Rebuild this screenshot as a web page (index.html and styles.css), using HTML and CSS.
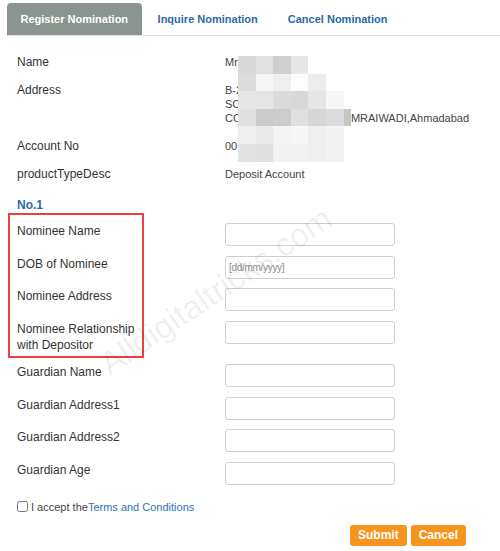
FILE: index.html
```html
<!DOCTYPE html>
<html lang="en">
<head>
    <meta charset="UTF-8">
    <meta name="viewport" content="width=device-width, initial-scale=1.0">
    <title>Nomination</title>
    <link rel="stylesheet" href="styles.css">
</head>
<body>
    <div class="page">
        <ul class="tabs">
            <li class="tab active">Register Nomination</li>
            <li class="tab">Inquire Nomination</li>
            <li class="tab">Cancel Nomination</li>
        </ul>

        <div class="content">
            <div class="info">
                <div class="info-row">
                    <div class="info-label">Name</div>
                    <div class="info-value">Mr<span class="masked" style="width:72px"></span></div>
                </div>
                <div class="info-row">
                    <div class="info-label">Address</div>
                    <div class="info-value">
                        B-2<br>
                        SC<br>
                        CC<span class="masked" style="width:110px"></span>MRAIWADI,Ahmadabad
                    </div>
                </div>
                <div class="info-row">
                    <div class="info-label">Account No</div>
                    <div class="info-value">00<span class="masked" style="width:100px"></span></div>
                </div>
                <div class="info-row">
                    <div class="info-label">productTypeDesc</div>
                    <div class="info-value">Deposit Account</div>
                </div>
            </div>

            <h4 class="section-title">No.1</h4>

            <form class="nomination-form">
                <div class="form-row">
                    <label>Nominee Name</label>
                    <input type="text" class="field">
                </div>
                <div class="form-row">
                    <label>DOB of Nominee</label>
                    <input type="text" class="field" placeholder="[dd/mm/yyyy]">
                </div>
                <div class="form-row">
                    <label>Nominee Address</label>
                    <input type="text" class="field">
                </div>
                <div class="form-row">
                    <label class="two-line">Nominee Relationship<br>with Depositor</label>
                    <input type="text" class="field">
                </div>
                <div class="form-row">
                    <label>Guardian Name</label>
                    <input type="text" class="field">
                </div>
                <div class="form-row">
                    <label>Guardian Address1</label>
                    <input type="text" class="field">
                </div>
                <div class="form-row">
                    <label>Guardian Address2</label>
                    <input type="text" class="field">
                </div>
                <div class="form-row">
                    <label>Guardian Age</label>
                    <input type="text" class="field">
                </div>

                <div class="accept">
                    <input type="checkbox" class="accept-box">
                    <span>I accept the</span><a href="#" class="terms">Terms and Conditions</a>
                </div>

                <div class="actions">
                    <button type="submit" class="btn">Submit</button>
                    <button type="button" class="btn">Cancel</button>
                </div>
            </form>
        </div>

        <!-- pixelated mask over personal data -->
        <div class="pixelate">
            <div class="px-row">
                <span style="background:#d9d9d9"></span><span style="background:#e2e2e2"></span><span style="background:#cfcfcf"></span><span style="background:#e6e6e6"></span>
            </div>
            <div class="px-row">
                <span style="background:#dcdcdc"></span><span style="background:#f6f6f6"></span><span style="background:#efefef"></span><span style="background:#fdfdfd"></span><span style="background:#ececec"></span>
            </div>
            <div class="px-row">
                <span style="background:#e6e6e6"></span><span style="background:#e5e5e5"></span><span style="background:#dadada"></span><span style="background:#d8d8d8"></span><span style="background:#e5e5e5"></span><span style="background:#f6f6f6"></span>
            </div>
            <div class="px-row">
                <span style="background:#e0e0e0"></span><span style="background:#cbcbcb"></span><span style="background:#cccccc"></span><span style="background:#dfdfdf"></span><span style="background:#d6d6d6"></span><span style="background:#dbdbdb"></span><span style="background:#c5c5c5;width:7px"></span>
            </div>
            <div class="px-row">
                <span style="background:#eeeeee"></span><span style="background:#e9e9e9"></span><span style="background:#f4f4f4"></span><span style="background:#f7f7f7"></span><span style="background:#efefef"></span><span style="background:#f3f3f3"></span>
            </div>
            <div class="px-row">
                <span style="background:#e2e2e2"></span><span style="background:#e0e0e0"></span><span style="background:#f2f2f2"></span><span style="background:#f3f3f3"></span><span style="background:#efefef"></span><span style="background:#f3f3f3"></span>
            </div>
        </div>

        <div class="highlight"></div>
        <div class="watermark">Alldigitaltricks.com</div>
    </div>
</body>
</html>
```

FILE: styles.css
```css
* {
    margin: 0;
    padding: 0;
    box-sizing: border-box;
    font-family: 'Liberation Sans', Arial, sans-serif;
}

body {
    background-color: #fff;
}

.page {
    position: relative;
    width: 500px;
    height: 551px;
    overflow: hidden;
    padding-left: 7px;
}

.tabs {
    list-style: none;
    display: flex;
    gap: 2px;
    margin-top: 3px;
    border-bottom: 1px solid #dedede;
}

.tab {
    height: 32px;
    line-height: 32px;
    padding: 0 14px;
    font-size: 11px;
    font-weight: bold;
    color: #2d6aa3;
    border-radius: 4px 4px 0 0;
}

.tab.active {
    background-color: #8a9590;
    color: #fff;
    padding: 0 13.5px;
}

.content {
    padding: 19px 0 0 10px;
}

.info-row {
    display: flex;
    margin-bottom: 14px;
    line-height: 14px;
}

.info-label {
    width: 208px;
    font-size: 12px;
    color: #333;
}

.info-value {
    font-size: 11px;
    color: #444;
}

.masked {
    display: inline-block;
    height: 1px;
}

.section-title {
    margin-top: 17px;
    font-size: 12px;
    line-height: 14px;
    color: #2d6aa3;
}

.nomination-form {
    margin-top: 9px;
}

.form-row {
    display: flex;
    align-items: flex-start;
    margin-bottom: 7.67px;
}

.form-row label {
    width: 208px;
    padding-top: 2px;
    font-size: 12px;
    line-height: 16px;
    color: #333;
}

.form-row label.two-line {
    padding-bottom: 1.33px;
}

.field {
    margin-top: 2px;
    width: 170px;
    height: 23px;
    border: 1px solid #cfcfcf;
    border-radius: 3px;
    background: #fff;
    padding: 0 3px;
    font-size: 10px;
    letter-spacing: -0.3px;
    color: #555;
}

.field::placeholder {
    color: #8a8a8a;
}

.accept {
    display: flex;
    align-items: center;
    margin-top: 15px;
    font-size: 11px;
    line-height: 14px;
    color: #444;
}

.accept-box {
    width: 11px;
    height: 11px;
    margin: 0 3px 0 0;
}

.terms {
    color: #2f73b6;
    text-decoration: none;
}

.actions {
    display: flex;
    justify-content: flex-end;
    gap: 4px;
    margin-top: 11px;
    padding-right: 34px;
}

.btn {
    background-color: #f7941d;
    color: #fff;
    border: none;
    border-radius: 3px;
    padding: 3px 8px;
    font-size: 12px;
    line-height: 15px;
    font-weight: bold;
    cursor: pointer;
}

.pixelate {
    position: absolute;
    left: 238px;
    top: 56px;
}

.px-row {
    display: flex;
    height: 17.6px;
}

.px-row span {
    display: block;
    width: 17.6px;
    height: 100%;
}

.highlight {
    position: absolute;
    left: 8px;
    top: 213px;
    width: 136px;
    height: 145px;
    border: 2px solid #ef3e42;
}

.watermark {
    position: absolute;
    left: 76px;
    top: 271px;
    width: 280px;
    text-align: center;
    font-size: 33px;
    line-height: 40px;
    color: rgba(0, 0, 0, 0.07);
    transform: rotate(-34deg);
    pointer-events: none;
}
```
